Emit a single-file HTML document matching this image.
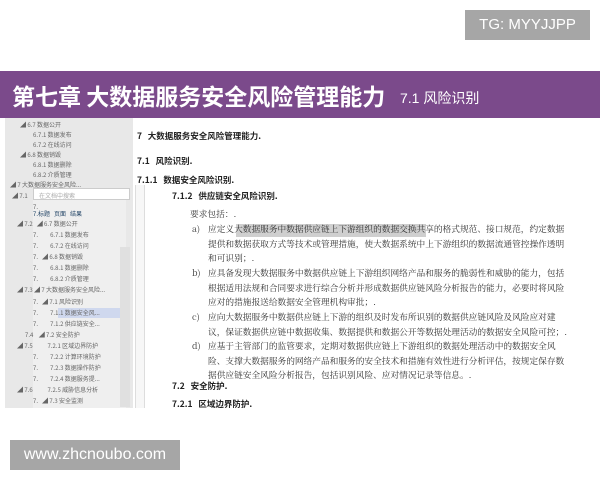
<!DOCTYPE html>
<html><head><meta charset="utf-8">
<style>
*{margin:0;padding:0;box-sizing:border-box}
body{width:600px;height:480px;background:#fff;position:relative;overflow:hidden;font-family:"Liberation Sans","Noto Sans CJK SC",sans-serif}
.a{position:absolute;white-space:nowrap}
.tg{left:465px;top:10px;width:125px;height:30px;background:#a6a6a6;color:#fff;font-size:15px;line-height:30px;text-align:center}
.ban{left:0;top:71px;width:600px;height:47px;background:#7b4a8b}
.t1{left:12px;top:78px;color:#fff;font-size:23px;font-weight:bold;font-family:"Noto Sans CJK SC",sans-serif}
.t2{left:400px;top:88px;color:#fff;font-size:14px;font-family:"Liberation Sans","Noto Sans CJK SC",sans-serif}
.lp{left:5px;top:118px;width:128px;height:290px;background:#e8e8e8}
.ip{left:33px;top:188px;width:93px;height:220px;background:#efefef}
.rul{left:135px;top:185px;width:10px;height:223px;background:#f7f7f7;border-left:1px solid #ddd;border-right:1px solid #ddd}
.s{font-size:6px;color:#666;font-family:"Noto Sans CJK SC",sans-serif}
.h{font-size:8.5px;color:#222;font-family:"Noto Sans CJK SC",sans-serif;font-weight:bold}
.b{font-size:8.7px;color:#333;font-family:"Noto Serif CJK SC",serif;line-height:14.7px}
.web{left:10px;top:440px;width:170px;height:30px;background:#a6a6a6;color:#fff;font-size:16px;line-height:30px;text-align:center}
</style></head><body>
<div class="a tg">TG: MYYJJPP</div>
<div class="a ban"></div>
<div class="a t1">第七章 大数据服务安全风险管理能力</div>
<div class="a t2">7.1 风险识别</div>
<div class="a lp"></div>
<div class="a ip"></div>
<div class="a" style="left:33px;top:188px;width:97px;height:12px;background:#fff;border:1px solid #ccc"></div>
<div class="a rul"></div>
<div class="a" style="left:120px;top:247px;width:10px;height:160px;background:#e0e0e0"></div>
<div class="a" style="left:58px;top:308px;width:62px;height:10px;background:#cfd8ee"></div>
<div class="a s" style="left:20px;top:120px">◢ 6.7 数据公开</div>
<div class="a s" style="left:33px;top:130px">6.7.1 数据发布</div>
<div class="a s" style="left:33px;top:140px">6.7.2 在线访问</div>
<div class="a s" style="left:20px;top:150px">◢ 6.8 数据销毁</div>
<div class="a s" style="left:33px;top:160px">6.8.1 数据删除</div>
<div class="a s" style="left:33px;top:170px">6.8.2 介质管理</div>
<div class="a s" style="left:10px;top:180px">◢ 7 大数据服务安全风险...</div>
<div class="a s" style="left:12px;top:191px">◢ 7.1</div>
<div class="a s" style="left:39px;top:191px;color:#aaa">在文档中搜索</div>
<div class="a s" style="left:33px;top:202px">7.</div>
<div class="a s" style="left:33px;top:209px;color:#246">7.标题 &nbsp; 页面 &nbsp; 结果</div>
<div class="a s" style="left:17px;top:219px">◢ 7.2 &nbsp; ◢ 6.7 数据公开</div>
<div class="a s" style="left:33px;top:230px">7. &nbsp;&nbsp;&nbsp;&nbsp;&nbsp;&nbsp;&nbsp; 6.7.1 数据发布</div>
<div class="a s" style="left:33px;top:241px">7. &nbsp;&nbsp;&nbsp;&nbsp;&nbsp;&nbsp;&nbsp; 6.7.2 在线访问</div>
<div class="a s" style="left:33px;top:252px">7. &nbsp; ◢ 6.8 数据销毁</div>
<div class="a s" style="left:33px;top:263px">7. &nbsp;&nbsp;&nbsp;&nbsp;&nbsp;&nbsp;&nbsp; 6.8.1 数据删除</div>
<div class="a s" style="left:33px;top:274px">7. &nbsp;&nbsp;&nbsp;&nbsp;&nbsp;&nbsp;&nbsp; 6.8.2 介质管理</div>
<div class="a s" style="left:17px;top:285px">◢ 7.3 ◢ 7 大数据服务安全风险...</div>
<div class="a s" style="left:33px;top:297px">7. &nbsp; ◢ 7.1 风险识别</div>
<div class="a s" style="left:33px;top:308px">7. &nbsp;&nbsp;&nbsp;&nbsp;&nbsp;&nbsp;&nbsp; 7.1.1 数据安全风...</div>
<div class="a s" style="left:33px;top:319px">7. &nbsp;&nbsp;&nbsp;&nbsp;&nbsp;&nbsp;&nbsp; 7.1.2 供应链安全...</div>
<div class="a s" style="left:25px;top:330px">7.4 &nbsp;&nbsp; ◢ 7.2 安全防护</div>
<div class="a s" style="left:17px;top:341px">◢ 7.5 &nbsp;&nbsp;&nbsp;&nbsp;&nbsp;&nbsp;&nbsp;&nbsp;&nbsp; 7.2.1 区域边界防护</div>
<div class="a s" style="left:33px;top:352px">7. &nbsp;&nbsp;&nbsp;&nbsp;&nbsp;&nbsp;&nbsp; 7.2.2 计算环境防护</div>
<div class="a s" style="left:33px;top:363px">7. &nbsp;&nbsp;&nbsp;&nbsp;&nbsp;&nbsp;&nbsp; 7.2.3 数据操作防护</div>
<div class="a s" style="left:33px;top:374px">7. &nbsp;&nbsp;&nbsp;&nbsp;&nbsp;&nbsp;&nbsp; 7.2.4 数据服务提...</div>
<div class="a s" style="left:17px;top:385px">◢ 7.6 &nbsp;&nbsp;&nbsp;&nbsp;&nbsp;&nbsp;&nbsp;&nbsp;&nbsp; 7.2.5 威胁信息分析</div>
<div class="a s" style="left:33px;top:396px">7. &nbsp; ◢ 7.3 安全监测</div>
<div class="a h" style="left:137px;top:130px">7 &nbsp; 大数据服务安全风险管理能力.</div>
<div class="a h" style="left:137px;top:155px">7.1 &nbsp; 风险识别.</div>
<div class="a h" style="left:137px;top:174px">7.1.1 &nbsp; 数据安全风险识别.</div>
<div class="a h" style="left:172px;top:190px">7.1.2 &nbsp; 供应链安全风险识别.</div>
<div class="a b" style="left:190px;top:207px">要求包括：.</div>
<div class="a" style="left:236px;top:224px;width:190px;height:13px;background:#cfcfcf"></div>
<div class="a b" style="left:192px;top:222px">a)</div>
<div class="a b" style="left:208px;top:222px">应定义大数据服务中数据供应链上下游组织的数据交换共享的格式规范、接口规范，约定数据<br>提供和数据获取方式等技术或管理措施，使大数据系统中上下游组织的数据流通管控操作透明<br>和可识别；.</div>
<div class="a b" style="left:192px;top:266px">b)</div>
<div class="a b" style="left:208px;top:266px">应具备发现大数据服务中数据供应链上下游组织网络产品和服务的脆弱性和威胁的能力，包括<br>根据适用法规和合同要求进行综合分析并形成数据供应链风险分析报告的能力，必要时将风险<br>应对的措施报送给数据安全管理机构审批；.</div>
<div class="a b" style="left:192px;top:310px">c)</div>
<div class="a b" style="left:208px;top:310px">应向大数据服务中数据供应链上下游的组织及时发布所识别的数据供应链风险及风险应对建<br>议，保证数据供应链中数据收集、数据提供和数据公开等数据处理活动的数据安全风险可控；.</div>
<div class="a b" style="left:192px;top:339px">d)</div>
<div class="a b" style="left:208px;top:339px">应基于主管部门的监管要求，定期对数据供应链上下游组织的数据处理活动中的数据安全风<br>险、支撑大数据服务的网络产品和服务的安全技术和措施有效性进行分析评估，按规定保存数<br>据供应链安全风险分析报告，包括识别风险、应对情况记录等信息。.</div>
<div class="a h" style="left:172px;top:380px">7.2 &nbsp; 安全防护.</div>
<div class="a h" style="left:172px;top:398px">7.2.1 &nbsp; 区域边界防护.</div>
<div class="a web">www.zhcnoubo.com</div>
</body></html>
